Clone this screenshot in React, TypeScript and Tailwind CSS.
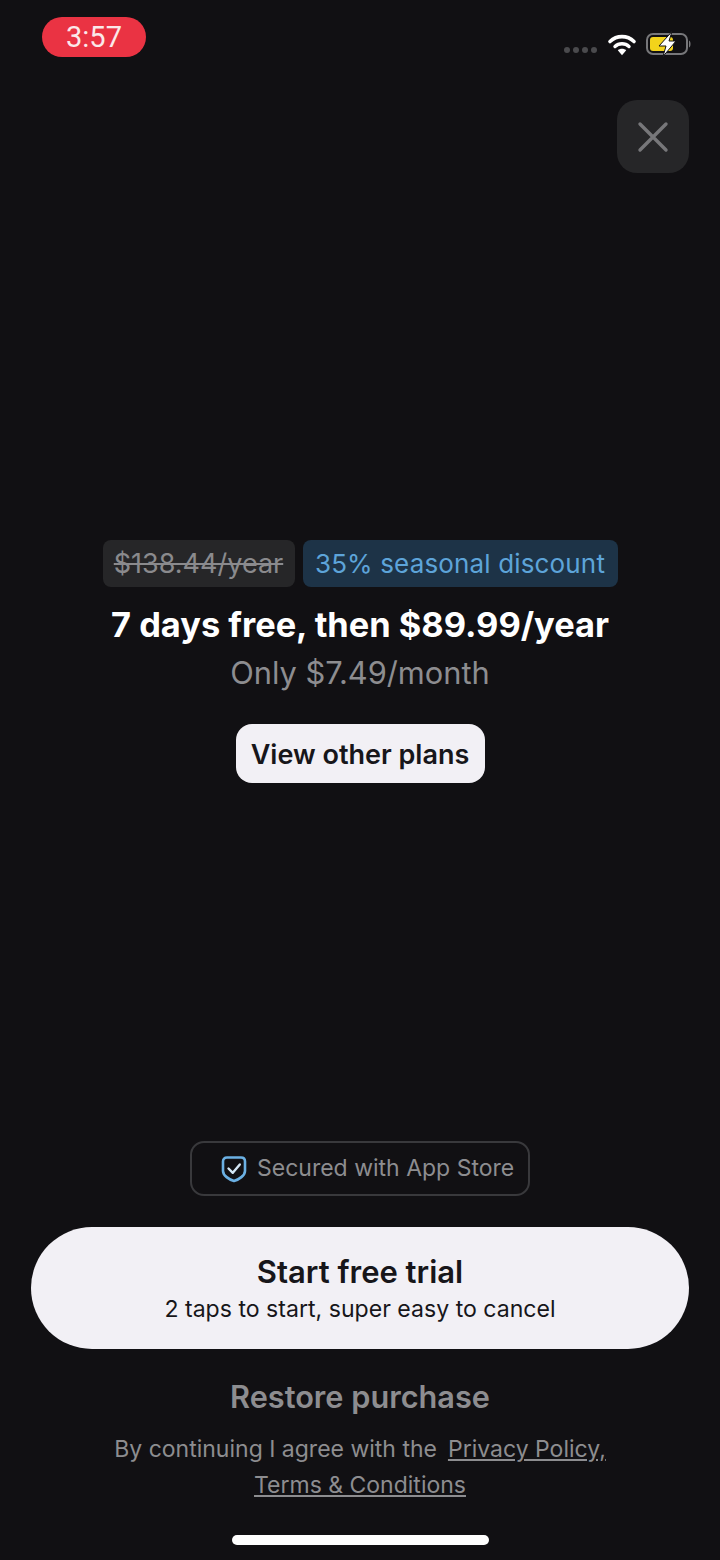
import React from "react";

const WifiIcon = () => (
  <svg width="30" height="24" viewBox="0 0 30 24" fill="none">
    <path d="M3 9.5C9.8 3 20.2 3 27 9.5" stroke="#fff" strokeWidth="3.6" strokeLinecap="round" />
    <path d="M8 14.5C11.8 10.9 18.2 10.9 22 14.5" stroke="#fff" strokeWidth="3.4" strokeLinecap="round" />
    <path d="M10.8 18.2C13 16.2 17 16.2 19.2 18.2L15 23.2Z" fill="#fff" />
  </svg>
);

const BatteryIcon = () => (
  <svg width="46" height="28" viewBox="0 0 46 28" fill="none">
    <rect x="1" y="4" width="40" height="20" rx="6" stroke="#77777a" strokeWidth="2" />
    <rect x="4" y="7" width="23" height="14" rx="3" fill="#f2d31b" />
    <path d="M43 10.5C45 11.2 45 16.8 43 17.5Z" fill="#77777a" />
    <path d="M26 1.5L13 16H20L17 26.5L30 11H23Z" fill="#fff" stroke="#111013" strokeWidth="1" />
  </svg>
);

const ShieldIcon = () => (
  <svg className="shrink-0" width="26" height="28" viewBox="0 0 26 28" fill="none">
    <path d="M2 6.5C2 4 3.5 2.5 6 2.5H20C22.5 2.5 24 4 24 6.5V16C24 20.5 18 24.5 13 26C8 24.5 2 20.5 2 16Z" stroke="#6bb0e3" strokeWidth="2.6" strokeLinejoin="round" />
    <path d="M7.5 13.5L11.8 17.8L18.8 9.5" stroke="#d4e6f4" strokeWidth="2.4" strokeLinecap="round" strokeLinejoin="round" />
  </svg>
);

const CloseIcon = () => (
  <svg width="32" height="32" viewBox="0 0 32 32" fill="none">
    <path d="M3 3L29 29M29 3L3 29" stroke="#77777a" strokeWidth="3.4" strokeLinecap="round" />
  </svg>
);

export default function App() {
  return (
    <div className="relative flex h-[1560px] w-[720px] flex-col overflow-hidden bg-[#111013] font-['Inter',sans-serif]">
      {/* status bar */}
      <div className="flex h-[100px] items-start justify-between pl-[42px] pr-[28px] pt-[17px]">
        <div className="flex h-[40px] w-[104px] items-center justify-center rounded-[20px] bg-[#ea3343] pt-[1px] font-['Roboto',sans-serif] text-[29px] text-[#fbe9ea]">
          3:57
        </div>
        <div className="flex items-center pt-[13px]">
          <div className="mr-[10px] mt-[12px] flex gap-[3px]">
            <span className="h-[6px] w-[6px] rounded-full bg-[#4a4a4d]" />
            <span className="h-[6px] w-[6px] rounded-full bg-[#4a4a4d]" />
            <span className="h-[6px] w-[6px] rounded-full bg-[#4a4a4d]" />
            <span className="h-[6px] w-[6px] rounded-full bg-[#4a4a4d]" />
          </div>
          <WifiIcon />
          <div className="ml-[9px]">
            <BatteryIcon />
          </div>
        </div>
      </div>

      {/* close */}
      <div className="flex justify-end pr-[31px]">
        <button className="flex h-[73px] w-[72px] items-center justify-center rounded-[20px] bg-[#262628]">
          <CloseIcon />
        </button>
      </div>

      {/* pricing */}
      <div className="mt-[367px] flex flex-col items-center">
        <div className="flex gap-[8px]">
          <div className="flex h-[47px] w-[192px] items-center justify-center rounded-[8px] bg-[#262628] pt-[2px] text-[27px] text-[#8a8a8d] line-through">
            $138.44/year
          </div>
          <div className="flex h-[47px] w-[315px] items-center justify-center rounded-[8px] bg-[#1d3347] text-[26px] tracking-[0.15px] text-[#5da4d9]">
            35% seasonal discount
          </div>
        </div>
        <div className="mt-[14px] text-[34.4px] leading-[48px] font-bold text-white">
          7 days free, then $89.99/year
        </div>
        <div className="mt-[4px] text-[30.8px] leading-[40px] text-[#8d8d90]">Only $7.49/month</div>
        <button className="mt-[31px] flex h-[59px] w-[249px] items-center justify-center rounded-[16px] bg-[#f2f0f5] pt-[3px] text-[27px] font-semibold text-[#17161a]">
          View other plans
        </button>
      </div>

      {/* bottom */}
      <div className="mt-[358px] flex flex-col items-center">
        <div className="flex h-[55px] w-[340px] items-center gap-[10px] rounded-[14px] border-2 border-[#39393c] pl-[29px]">
          <ShieldIcon />
          <span className="text-[23px] whitespace-nowrap text-[#8d8d90]">Secured with App Store</span>
        </div>
        <button className="mt-[31px] flex h-[122px] w-[658px] flex-col items-center justify-center rounded-[61px] bg-[#f2f0f5] text-[#17161a]">
          <span className="text-[31px] leading-[42px] font-semibold">Start free trial</span>
          <span className="text-[23.1px] leading-[32px]">2 taps to start, super easy to cancel</span>
        </button>
        <div className="mt-[27px] text-[30.7px] leading-[42px] font-semibold text-[#8d8d90]">Restore purchase</div>
        <div className="mt-[13px] flex gap-[11px] text-[23px] leading-[36px] text-[#8d8d90]">
          <span>By continuing I agree with the</span>
          <span className="underline">Privacy Policy,</span>
        </div>
        <div className="text-[23px] leading-[36px] text-[#8d8d90] underline">Terms &amp; Conditions</div>
      </div>

      {/* home indicator */}
      <div className="absolute bottom-[15px] left-[232px] h-[10px] w-[257px] rounded-full bg-white" />
    </div>
  );
}
